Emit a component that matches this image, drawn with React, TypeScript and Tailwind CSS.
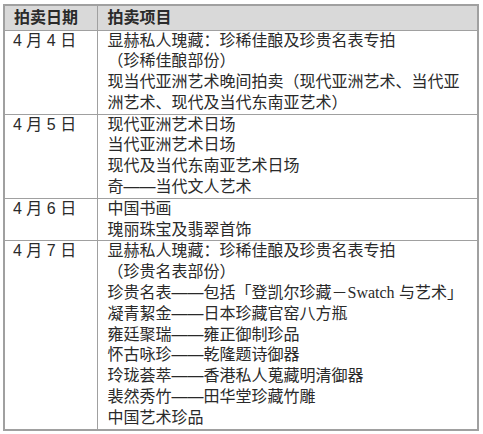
const rows: { date: string; items: string[] }[] = [
  {
    date: '4 月 4 日',
    items: [
      '显赫私人瑰藏：珍稀佳酿及珍贵名表专拍',
      '（珍稀佳酿部份）',
      '现当代亚洲艺术晚间拍卖（现代亚洲艺术、当代亚',
      '洲艺术、现代及当代东南亚艺术）',
    ],
  },
  {
    date: '4 月 5 日',
    items: ['现代亚洲艺术日场', '当代亚洲艺术日场', '现代及当代东南亚艺术日场', '奇——当代文人艺术'],
  },
  {
    date: '4 月 6 日',
    items: ['中国书画', '瑰丽珠宝及翡翠首饰'],
  },
  {
    date: '4 月 7 日',
    items: [
      '显赫私人瑰藏：珍稀佳酿及珍贵名表专拍',
      '（珍贵名表部份）',
      'SWATCH',
      '凝青絜金——日本珍藏官窑八方瓶',
      '雍廷聚瑞——雍正御制珍品',
      '怀古咏珍——乾隆题诗御器',
      '玲珑荟萃——香港私人蒐藏明清御器',
      '裴然秀竹——田华堂珍藏竹雕',
      '中国艺术珍品',
    ],
  },
];

function Line({ text }: { text: string }) {
  if (text === 'SWATCH') {
    return (
      <div className="whitespace-nowrap">
        珍贵名表——包括「登凯尔珍藏－
        <span className="font-['Liberation_Serif','Noto_Sans_CJK_SC',serif]">Swatch</span> 与艺术」
      </div>
    );
  }
  return <div className="whitespace-nowrap">{text}</div>;
}

export default function App() {
  return (
    <div className="bg-white w-[483px] h-[434px] pt-[4px] pl-[3px] font-['Liberation_Sans','Noto_Sans_CJK_SC',sans-serif] text-[16px] leading-[20.8px] text-[#2a2a2a]">
      <table className="w-[476px] border-collapse border-2 border-[#a0a0a0] table-fixed">
        <colgroup>
          <col className="w-[93px]" />
          <col />
        </colgroup>
        <thead>
          <tr className="bg-[#d9d9d9] h-[25px]">
            <th className="border border-[#a0a0a0] text-left font-bold text-[16px] leading-[20px] pl-[9px] py-0 align-middle">拍卖日期</th>
            <th className="border border-[#a0a0a0] text-left font-bold text-[16px] leading-[20px] pl-[10px] py-0 align-middle">拍卖项目</th>
          </tr>
        </thead>
        <tbody>
          {rows.map((r) => (
            <tr key={r.date}>
              <td className="border border-[#a0a0a0] align-top pl-[8px] py-0 whitespace-nowrap">{r.date}</td>
              <td className="border border-[#a0a0a0] align-top pl-[10px] py-0">
                {r.items.map((t, i) => (
                  <Line key={i} text={t} />
                ))}
              </td>
            </tr>
          ))}
        </tbody>
      </table>
    </div>
  );
}
